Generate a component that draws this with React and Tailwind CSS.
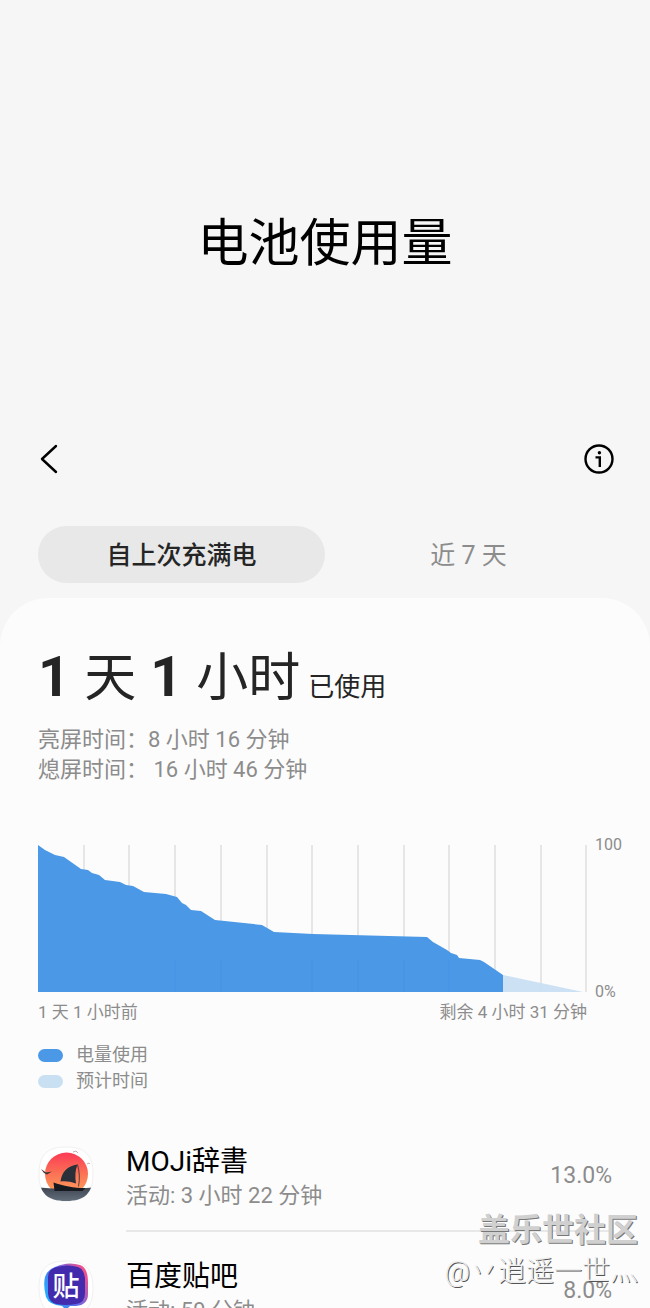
import React from 'react';

const levels = [
  [0, 0], [7, 5], [17, 10], [26, 12], [43, 24], [50, 25], [54, 28], [61, 30], [67, 35], [82, 37],
  [88, 40], [95, 41], [106, 47], [128, 49], [139, 52], [144, 58], [148, 60], [153, 65], [163, 66],
  [177, 75], [224, 80], [236, 87], [275, 89], [389, 92], [395, 97], [409, 105], [413, 108],
  [419, 110], [421, 113], [442, 115], [446, 117], [465, 130],
];

const apps = [
  { name: 'MOJi辞書', active: '活动: 3 小时 22 分钟', percent: '13.0%', icon: <MojiIcon /> },
  { name: '百度贴吧', active: '活动: 59 分钟', percent: '8.0%', icon: <TiebaIcon /> },
];

function MojiIcon() {
  return (
    <svg width="56" height="56" viewBox="0 0 56 56" aria-hidden="true">
      <defs>
        <linearGradient id="sun" x1="0" y1="0" x2="0" y2="1">
          <stop offset="0" stopColor="#fb3a55" />
          <stop offset="0.5" stopColor="#fb7355" />
          <stop offset="1" stopColor="#ffa35c" />
        </linearGradient>
        <linearGradient id="sea" x1="0" y1="0" x2="0" y2="1">
          <stop offset="0" stopColor="#3e4651" />
          <stop offset="1" stopColor="#66717f" />
        </linearGradient>
        <clipPath id="squircle">
          <path d="M28 1C47 1 55 9 55 28S47 55 28 55 1 47 1 28 9 1 28 1Z" />
        </clipPath>
      </defs>
      <path d="M28 1C47 1 55 9 55 28S47 55 28 55 1 47 1 28 9 1 28 1Z" fill="#fff" stroke="#f0f0f0" />
      <g clipPath="url(#squircle)">
        <circle cx="28.5" cy="28" r="21.5" fill="url(#sun)" />
        <path d="M0 41.5q28 3 56 0V56H0z" fill="url(#sea)" />
        <path d="M15.5 36.5c10 3.500 20 5.500 32 5.500l-3 3H16.500z" fill="#171b20" />
        <path d="M22.500 35.500C24 26 29 20 39.500 18.500c-2.500 6-2.500 12-1.500 19-6-2-10-2.500-15.500-2Z" fill="#293039" />
        <path d="M39.500 18.500c2 7 2.500 14 1 22" fill="none" stroke="#293039" strokeWidth="0.8" />
        <path d="m3 23 5 3.500 6-1-5 3-3-1.500z" fill="#3c3234" />
        <path d="m35 6 3-1 2 2M49 18l2-1 1 1" fill="none" stroke="#b59a9a" strokeWidth="0.8" />
      </g>
    </svg>
  );
}

function TiebaIcon() {
  return (
    <svg width="56" height="56" viewBox="0 0 56 56" aria-hidden="true">
      <defs>
        <linearGradient id="rim" x1="0" y1="0.8" x2="1" y2="0.2">
          <stop offset="0" stopColor="#19b9ff" />
          <stop offset="0.5" stopColor="#5b6af0" />
          <stop offset="1" stopColor="#ff4f83" />
        </linearGradient>
      </defs>
      <path d="M28 1C47 1 55 9 55 28S47 55 28 55 1 47 1 28 9 1 28 1Z" fill="#fff" stroke="#f0f0f0" />
      <path d="M17 7Q30 1 42 5q8 3 8 17v12q0 11-12 12h-6l-4 4-4-4q-13-1-16-9-3-12-1-20 2-7 10-10Z" fill="url(#rim)" />
      <path d="M19 7q11-3 21 0 6 2 7 11v15q0 10-9 11-10 2-20 0-7-2-8-10V17q0-8 9-10Z" fill="#432bad" />
      <text x="28" y="36" textAnchor="middle" fontSize="27" fontWeight="500" fill="#fff">贴</text>
    </svg>
  );
}

function BatteryChart() {
  const line = levels.map((p) => p.join(',')).join(' ');
  return (
    <div className="flex gap-2 pr-[27px]">
      <div className="min-w-0 flex-1">
        <svg viewBox="0 0 549 147" preserveAspectRatio="none" className="block h-[147px] w-full" role="img" aria-label="电量使用">
          {Array.from({ length: 12 }, (_, i) => (
            <path key={i} d={`M${Math.round((i + 1) * 45.7)} 0V147`} stroke="#e6e6e6" strokeWidth="2" />
          ))}
          <polygon points="465,130 545,147 465,147" fill="#c6dff3" fillOpacity="0.9" />
          <polygon points={`${line} 465,147 0,147`} fill="#4a98e6" />
          {[3, 4, 6, 7, 8, 9].map((i) => (
            <path key={i} d={`M${Math.round(i * 45.7)} 115V147`} stroke="#3f8fdd" strokeOpacity="0.4" />
          ))}
        </svg>
        <div className="mt-2 flex justify-between text-[17px] leading-6 text-[#8c8c8c]">
          <span>1 天 1 小时前</span>
          <span>剩余 4 小时 31 分钟</span>
        </div>
      </div>
      <div className="-mt-3 flex h-[171px] w-7 shrink-0 flex-col justify-between text-[16px] leading-6 text-[#8c8c8c]">
        <span>100</span>
        <span>0%</span>
      </div>
    </div>
  );
}

function AppRow({ app, divider }) {
  return (
    <li className="flex gap-8">
      <div className="mt-7 shrink-0">{app.icon}</div>
      <div className={`flex min-w-0 flex-1 items-center justify-between h-[114px] pb-1 ${divider ? 'border-b-2 border-[#e8e8e8]' : ''}`}>
        <div className="pt-3">
          <h2 className="text-[28px] leading-9 text-black">{app.name}</h2>
          <p className="text-[22px] leading-8 text-[#8c8c8c]">{app.active}</p>
        </div>
        <span className="pt-2 text-[23px] text-[#8c8c8c]">{app.percent}</span>
      </div>
    </li>
  );
}

export default function App() {
  return (
    <div className="relative flex h-screen flex-col overflow-hidden bg-[#f6f6f6] font-[Roboto,'Noto_Sans_CJK_SC',sans-serif]" lang="zh-CN">
      <header>
        <h1 className="pt-[206px] text-center text-[51px] leading-[76px] text-black">电池使用量</h1>
        <div className="mt-[153px] flex h-12 items-center justify-between pr-[35px] pl-9">
          <button type="button" aria-label="返回">
            <svg width="24" height="32" viewBox="0 0 24 32" fill="none" stroke="#000" strokeWidth="2.4" strokeLinecap="round" strokeLinejoin="round">
              <path d="M20 3 6 16l14 13" />
            </svg>
          </button>
          <button type="button" aria-label="信息">
            <svg width="32" height="32" viewBox="0 0 32 32" fill="none" stroke="#000" strokeWidth="2.4">
              <circle cx="16" cy="16" r="13.5" />
              <path d="M12.5 14.4h4.3V24" />
              <circle cx="16.4" cy="9.8" r="1.7" fill="#000" stroke="none" />
            </svg>
          </button>
        </div>
      </header>

      <nav className="mx-[38px] mt-[43px] grid h-[57px] shrink-0 grid-cols-2">
        <button type="button" className="rounded-full bg-[#e8e8e8] pt-0.5 text-[25px] font-medium text-[#252525]">自上次充满电</button>
        <button type="button" className="rounded-full pt-0.5 text-[25px] text-[#8c8c8c]">近 7 天</button>
      </nav>

      <main className="mt-[15px] flex-1 rounded-t-[48px] bg-[#fcfcfc] pl-[38px]">
        <p className="flex items-baseline gap-2 pt-[41px] text-[#252525]">
          <span className="flex items-baseline gap-[14px] text-[52px] leading-[76px]">
            <b className="text-[56px]">1</b>
            <span>天</span>
            <b className="text-[56px]">1</b>
            <span>小时</span>
          </span>
          <span className="text-[26px]">已使用</span>
        </p>
        <div className="mt-2 mb-[60px] text-[22px] leading-[30px] text-[#8c8c8c]">
          <p>亮屏时间：8 小时 16 分钟</p>
          <p>熄屏时间： 16 小时 46 分钟</p>
        </div>

        <BatteryChart />

        <ul className="mt-[18px] text-[18px] leading-[26px] text-[#8c8c8c]">
          <li className="flex items-center gap-[13px]">
            <span className="h-[13px] w-[25px] rounded-full bg-[#4a98e6]" />
            电量使用
          </li>
          <li className="flex items-center gap-[13px]">
            <span className="h-[13px] w-[25px] rounded-full bg-[#c9e0f3]" />
            预计时间
          </li>
        </ul>

        <ul className="mt-6 pr-[38px]">
          {apps.map((app, i) => (
            <AppRow key={app.name} app={app} divider={i < apps.length - 1} />
          ))}
        </ul>
      </main>

      <div className="pointer-events-none absolute right-3 bottom-4 text-right">
        <p className="text-[32px] leading-[44px] font-bold text-[#d0d0d0] [text-shadow:1px_1px_0_#777]">盖乐世社区</p>
        <p className="text-[28px] leading-[40px] font-light text-[#eeeeee] [text-shadow:1px_1px_0_#555]">@丷逍遥一世灬</p>
      </div>
    </div>
  );
}
